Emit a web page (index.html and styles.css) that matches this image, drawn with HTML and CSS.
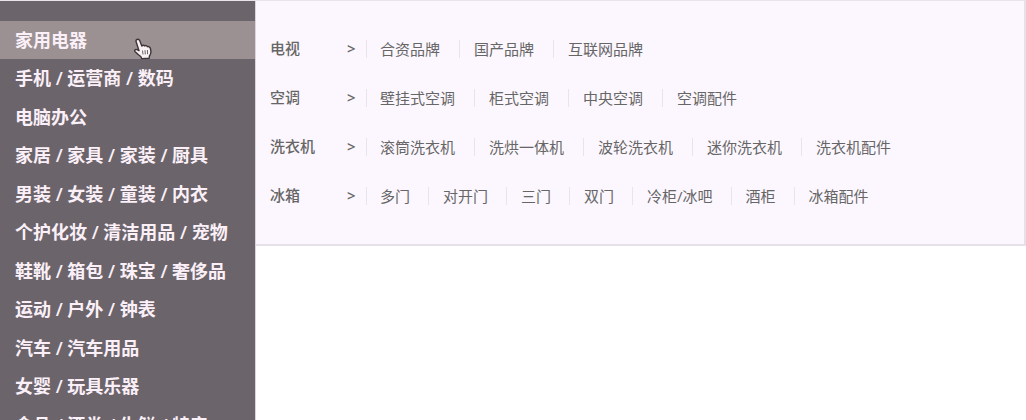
FILE: index.html
```html
<!DOCTYPE html>
<html lang="zh-CN">
<head>
<meta charset="utf-8">
<title>商品分类</title>
<link rel="stylesheet" href="styles.css">
</head>
<body>
<div class="menu">
  <nav class="sidebar">
    <ul class="categories">
      <li class="category active"><a href="#">家用电器</a></li>
      <li class="category"><a href="#">手机 / 运营商 / 数码</a></li>
      <li class="category"><a href="#">电脑办公</a></li>
      <li class="category"><a href="#">家居 / 家具 / 家装 / 厨具</a></li>
      <li class="category"><a href="#">男装 / 女装 / 童装 / 内衣</a></li>
      <li class="category"><a href="#">个护化妆 / 清洁用品 / 宠物</a></li>
      <li class="category"><a href="#">鞋靴 / 箱包 / 珠宝 / 奢侈品</a></li>
      <li class="category"><a href="#">运动 / 户外 / 钟表</a></li>
      <li class="category"><a href="#">汽车 / 汽车用品</a></li>
      <li class="category"><a href="#">女婴 / 玩具乐器</a></li>
      <li class="category"><a href="#">食品 / 酒类 / 生鲜 / 特产</a></li>
    </ul>
    <svg class="pointer" viewBox="0 0 20 22" width="20" height="22" aria-hidden="true">
      <path d="M4 1.5C5.300 1 6.300 1.600 6.800 2.800L8.800 8C9.600 6.900 11 7 11.600 8C12.600 7.200 13.900 7.600 14.400 8.700C15.600 8.200 16.900 8.900 17.300 10.200C18.400 13.600 18.200 16 16.400 18L16.200 20.300L8.600 20.600L7.800 18.500C5.900 17.400 4.300 15.900 2.200 13.800C1 12.500 2.300 10.900 3.900 11.600L6 12.700L3.200 4C2.800 2.900 3.100 1.900 4 1.500Z" fill="#f8f2f5" stroke="#3d3539" stroke-width="1.400" stroke-linejoin="round"/>
      <path d="M9.500 12.500L10 16.500M12 12.200L12.300 16.400M14.400 12L14.600 16.200" stroke="#6d6468" stroke-width="1" fill="none"/>
    </svg>
  </nav>
  <section class="panel">
    <dl class="group">
      <dt class="group-name">电视</dt>
      <dd class="arrow">&gt;</dd>
      <dd class="links"><a href="#">合资品牌</a><a href="#">国产品牌</a><a href="#">互联网品牌</a></dd>
    </dl>
    <dl class="group">
      <dt class="group-name">空调</dt>
      <dd class="arrow">&gt;</dd>
      <dd class="links"><a href="#">壁挂式空调</a><a href="#">柜式空调</a><a href="#">中央空调</a><a href="#">空调配件</a></dd>
    </dl>
    <dl class="group">
      <dt class="group-name">洗衣机</dt>
      <dd class="arrow">&gt;</dd>
      <dd class="links"><a href="#">滚筒洗衣机</a><a href="#">洗烘一体机</a><a href="#">波轮洗衣机</a><a href="#">迷你洗衣机</a><a href="#">洗衣机配件</a></dd>
    </dl>
    <dl class="group">
      <dt class="group-name">冰箱</dt>
      <dd class="arrow">&gt;</dd>
      <dd class="links dense"><a href="#">多门</a><a href="#">对开门</a><a href="#">三门</a><a href="#">双门</a><a href="#">冷柜/冰吧</a><a href="#">酒柜</a><a href="#">冰箱配件</a></dd>
    </dl>
  </section>
</div>
</body>
</html>
```
FILE: styles.css
```css
* {
  box-sizing: border-box;
}

body {
  margin: 0;
  background: #fff;
  font-family: "Open Sans", "Noto Sans CJK SC", sans-serif;
}

a {
  color: inherit;
  text-decoration: none;
}

.menu {
  display: flex;
  align-items: flex-start;
  height: 100vh;
  overflow: hidden;
  border-top: 1px solid #eae4ea;
}

.sidebar {
  position: relative;
  flex: 0 0 256px;
  padding-top: 20px;
  background: #6b646b;
  border-right: 1px solid #dcd3de;
}

.categories {
  margin: 0;
  padding: 0;
  list-style: none;
}

.category a {
  display: block;
  padding-left: 15px;
  color: #fbf0f8;
  font-size: 18px;
  font-weight: 600;
  line-height: 38px;
  white-space: nowrap;
}

.category:nth-child(even) a {
  line-height: 39px;
}

.active {
  background: #9b9193;
}

.pointer {
  position: absolute;
  left: 133px;
  top: 37px;
}

.panel {
  flex: 1;
  min-width: 0;
  padding: 23px 0 24px 14px;
  background: #fcf7fe;
  border-right: 2px solid #e6e1e8;
  border-bottom: 2px solid #e6e0e8;
}

.group {
  display: flex;
  align-items: center;
  margin: 0;
  color: #666;
  font-size: 15px;
  line-height: 49px;
  white-space: nowrap;
}

.group-name {
  width: 77px;
  font-weight: 500;
}

.arrow {
  width: 19px;
  margin: 0;
  font-weight: 600;
}

.links {
  display: flex;
  align-items: center;
  margin: 0;
}

.links a {
  padding: 0 19px 0 13px;
  border-left: 1px solid #e9e4eb;
  line-height: 18px;
}

.links a + a {
  padding-left: 14px;
}

.dense a {
  padding-right: 18px;
}
```
